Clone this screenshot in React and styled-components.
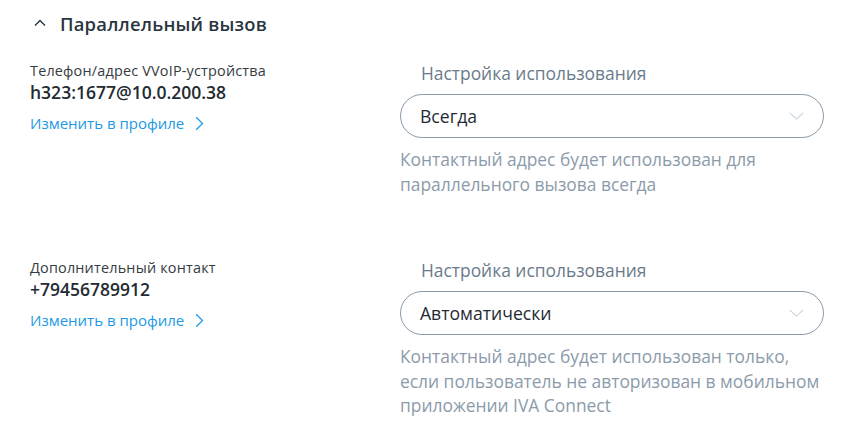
import React from "react";
import styled, { createGlobalStyle } from "styled-components";

const GlobalStyle = createGlobalStyle`
	body {
		margin: 0;
		background: #ffffff;
		font-family: "Open Sans", "Noto Sans", sans-serif;
	}
`;

const contacts = [
	{
		id: 1,
		label: "Телефон/адрес VVoIP-устройства",
		value: "h323:1677@10.0.200.38",
		option: "Всегда",
		hint: "Контактный адрес будет использован для параллельного вызова всегда",
	},
	{
		id: 2,
		label: "Дополнительный контакт",
		value: "+79456789912",
		option: "Автоматически",
		hint: "Контактный адрес будет использован только, если пользователь не авторизован в мобильном приложении IVA Connect",
	},
];

const ChevronUp = () => (
	<svg width="12" height="8" viewBox="0 0 12 8" fill="none">
		<path d="M1 6.5L6 1.5l5 5" stroke="#2a3541" strokeWidth="1.4" />
	</svg>
);

const ChevronRight = () => (
	<svg width="9" height="15" viewBox="0 0 9 15" fill="none">
		<path d="M1.2 1.2l6.3 6.3-6.3 6.3" stroke="#2299e6" strokeWidth="1.3" />
	</svg>
);

const ChevronDown = () => (
	<svg width="15" height="8" viewBox="0 0 15 8" fill="none">
		<path d="M0.7 0.8l6.8 6.3 6.8-6.3" stroke="#c6d2dd" strokeWidth="1.1" />
	</svg>
);

const App = () => {
	return (
		<>
			<GlobalStyle />
			<Section>
				<Header>
					<ChevronUp />
					<Title>Параллельный вызов</Title>
				</Header>
				{contacts.map((contact) => (
					<Row key={contact.id}>
						<Info>
							<Label>{contact.label}</Label>
							<Value>{contact.value}</Value>
							<Link>
								Изменить в профиле
								<ChevronRight />
							</Link>
						</Info>
						<Settings>
							<SettingsLabel>Настройка использования</SettingsLabel>
							<Select>
								<span>{contact.option}</span>
								<ChevronDown />
							</Select>
							<Hint>{contact.hint}</Hint>
						</Settings>
					</Row>
				))}
			</Section>
		</>
	);
};

const Section = styled.div`
	padding: 0 0 0 30px;
	width: 794px;
`;

const Header = styled.div`
	display: flex;
	align-items: center;
	gap: 14px;
	height: 46px;
	padding-left: 4px;
`;

const Title = styled.h2`
	margin: 0;
	font-size: 18.4px;
	font-weight: 600;
	letter-spacing: 0.2px;
	color: #2a3541;
`;

const Row = styled.div`
	display: grid;
	grid-template-columns: 370px 424px;
	box-sizing: border-box;
	padding-top: 16px;
	min-height: 197px;
`;

const Info = styled.div`
	display: flex;
	flex-direction: column;
	align-items: flex-start;
`;

const Label = styled.div`
	font-size: 14.4px;
	line-height: 18px;
	letter-spacing: 0.2px;
	color: #353b42;
`;

const Value = styled.div`
	margin-top: 1px;
	font-size: 17.5px;
	font-weight: 600;
	line-height: 22px;
	color: #232a31;
`;

const Link = styled.a`
	display: flex;
	align-items: center;
	gap: 11px;
	margin-top: 10px;
	font-size: 15px;
	line-height: 20px;
	color: #2299e6;
	cursor: pointer;
`;

const Settings = styled.div`
	display: flex;
	flex-direction: column;
`;

const SettingsLabel = styled.div`
	padding-left: 21px;
	font-size: 17.4px;
	line-height: 22px;
	color: #6b7b8b;
`;

const Select = styled.div`
	display: flex;
	align-items: center;
	justify-content: space-between;
	height: 44px;
	box-sizing: border-box;
	margin-top: 10px;
	padding: 0 19px 0 19px;
	border: 1px solid #8b9bac;
	border-radius: 22px;
	font-size: 17.6px;
	color: #1f2a35;
`;

const Hint = styled.div`
	margin-top: 9px;
	margin-right: -8px;
	font-size: 17.4px;
	line-height: 24.5px;
	color: #8c9bab;
`;

export default App;
